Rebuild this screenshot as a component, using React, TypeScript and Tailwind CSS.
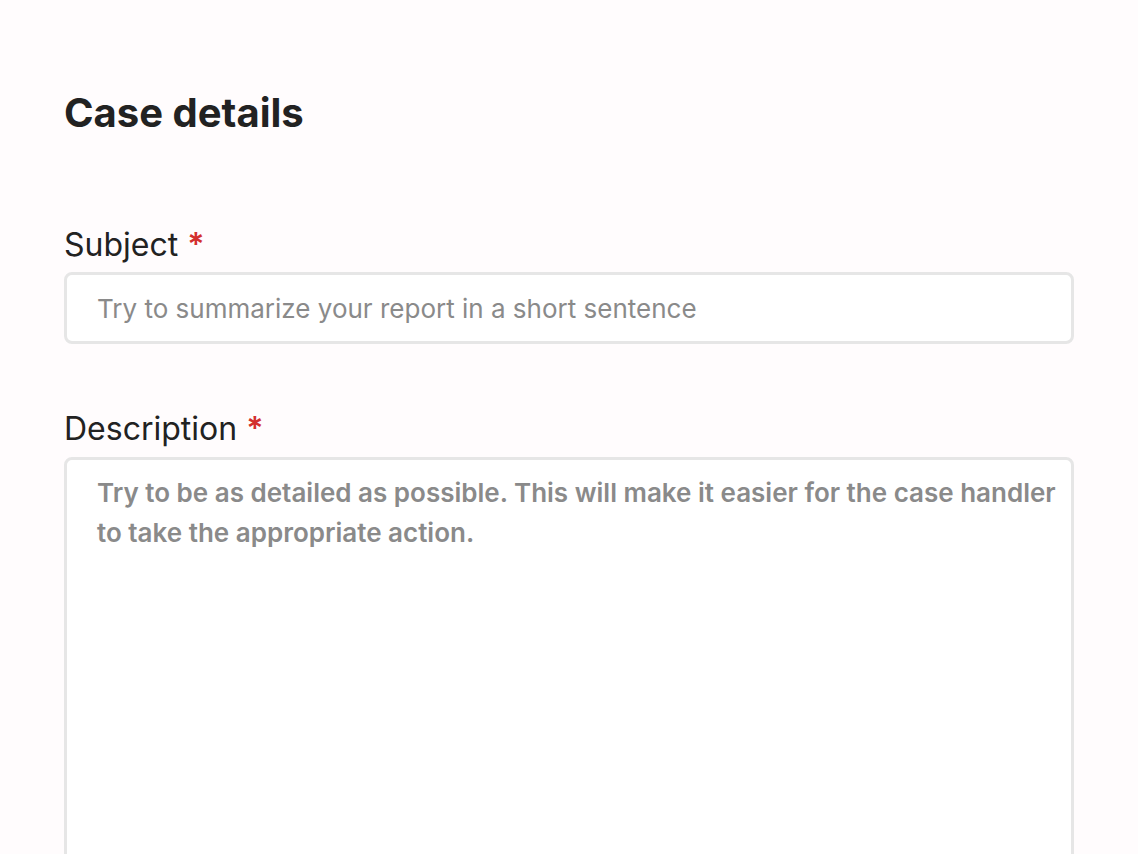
export default function App() {
  return (
    <div
      className="h-[854px] w-full overflow-hidden bg-[#fffcfd] text-[#222222]"
      style={{ fontFamily: 'Inter, "Noto Sans", sans-serif' }}
    >
      <div className="px-16 pt-[89px]">
        {/* Heading */}
        <h1 className="text-[40px] font-bold leading-[48px]">Case details</h1>

        {/* Subject */}
        <div className="mt-[88px]">
          <label className="block text-[32px] leading-[40px]">
            Subject <span className="font-semibold text-[#d32f2f]">*</span>
          </label>
          <input
            type="text"
            placeholder="Try to summarize your report in a short sentence"
            className="mt-[7px] h-[72px] w-[1010px] rounded-lg border-[3px] border-[#e6e6e6] bg-white px-[30px] text-[26px] outline-none placeholder:text-[#8a8a8a]"
          />
        </div>

        {/* Description */}
        <div className="mt-[65px]">
          <label className="block text-[32px] leading-[40px]">
            Description <span className="font-semibold text-[#d32f2f]">*</span>
          </label>
          <textarea
            placeholder="Try to be as detailed as possible. This will make it easier for the case handler to take the appropriate action."
            className="mt-[8px] block h-[460px] w-[1010px] resize-none rounded-lg border-[3px] border-[#e6e6e6] bg-white pb-4 pl-[30px] pr-[8px] pt-[13px] text-[26px] leading-[40px] outline-none placeholder:font-semibold placeholder:text-[#8a8a8a]"
          />
        </div>
      </div>
    </div>
  )
}
